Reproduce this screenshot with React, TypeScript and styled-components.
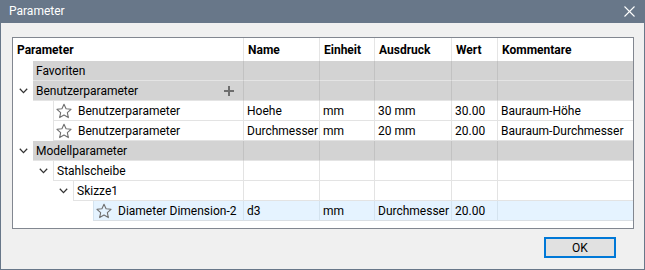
import React from 'react';
import styled, { createGlobalStyle } from 'styled-components';

const GlobalStyle = createGlobalStyle`
  html, body {
    margin: 0;
    padding: 0;
    background: #f0f0f0;
  }
  body {
    font-family: 'Segoe UI', Roboto, 'Noto Sans', sans-serif;
    font-size: 12px;
    color: #000;
  }
`;

const colWidths = [231, 76, 55, 77, 46];
const indentStep = 20;

type Variant = 'group' | 'plain' | 'selected';

const palette = {
  group: { bg: '#d3d3d3', vline: '#c2c2c2', hline: '#e4e4e4' },
  plain: { bg: '#ffffff', vline: '#e3e3e3', hline: '#e3e3e3' },
  selected: { bg: '#e5f3ff', vline: '#d4e3ef', hline: '#dadfe4' }
};

const Window = styled.div`
  width: 645px;
  height: 270px;
  box-sizing: border-box;
  display: flex;
  flex-direction: column;
  background: #f0f0f0;
  border: 1px solid #687789;
  border-top: none;
`;

const TitleBar = styled.div`
  height: 23px;
  flex: 0 0 auto;
  display: flex;
  align-items: center;
  justify-content: space-between;
  padding: 0 9px 0 8px;
  background: #687789;
  color: #ffffff;
`;

const Title = styled.span`
  font-size: 12px;
  line-height: 23px;
`;

const Body = styled.div`
  flex: 1;
  display: flex;
  flex-direction: column;
  padding: 14px 10px 11px 11px;
`;

const TableBox = styled.div`
  height: 192px;
  box-sizing: border-box;
  border: 1px solid #828790;
  background: #ffffff;
  overflow: hidden;
`;

const HeaderRow = styled.div`
  display: grid;
  grid-template-columns: ${colWidths.map(w => `${w}px`).join(' ')} 1fr;
  height: 23px;
`;

const HeaderCell = styled.div<{ $last?: boolean }>`
  box-sizing: border-box;
  padding: 1px 4px 0;
  font-weight: bold;
  line-height: 22px;
  white-space: nowrap;
  border-right: ${p => (p.$last ? 'none' : '1px solid #e5e5e5')};
`;

const Row = styled.div`
  display: flex;
  height: 20px;
`;

const Indent = styled.div<{ $width: number }>`
  flex: 0 0 ${p => p.$width}px;
  display: flex;
  justify-content: flex-end;
  align-items: center;
`;

const ToggleSlot = styled.div`
  width: 20px;
  display: flex;
  justify-content: center;
  align-items: center;
`;

const RowBody = styled.div<{ $first: number; $variant: Variant }>`
  flex: 1;
  display: grid;
  grid-template-columns: ${p => p.$first}px ${colWidths.slice(1).map(w => `${w}px`).join(' ')} 1fr;
  background: ${p => palette[p.$variant].bg};
`;

const Cell = styled.div<{ $variant: Variant; $edge?: boolean; $last?: boolean }>`
  box-sizing: border-box;
  display: flex;
  align-items: center;
  padding: 1px 3px 0;
  white-space: nowrap;
  overflow: hidden;
  line-height: 18px;
  border-bottom: 1px solid ${p => palette[p.$variant].hline};
  border-right: ${p => (p.$last ? 'none' : `1px solid ${palette[p.$variant].vline}`)};
  border-left: ${p => (p.$edge ? `1px solid ${palette[p.$variant].vline}` : 'none')};
`;

const NameCell = styled(Cell)`
  justify-content: space-between;
`;

const Label = styled.span<{ $star?: boolean }>`
  display: flex;
  align-items: center;
  gap: 6px;
  margin-left: ${p => (p.$star ? '-1px' : '0')};
`;

const PlusSlot = styled.span`
  display: flex;
  margin-right: 6px;
`;

const Footer = styled.div`
  display: flex;
  justify-content: flex-end;
  margin-top: 8px;
  padding-right: 18px;
`;

const OkButton = styled.button`
  width: 72px;
  height: 21px;
  box-sizing: border-box;
  border: 2px solid #0078d7;
  background: #e1e1e1;
  font-family: inherit;
  font-size: 12px;
  color: #000;
  padding: 0;
`;

const Chevron = () => (
  <svg width="9" height="6" viewBox="0 0 9 6">
    <polyline points="0.8,0.8 4.5,4.6 8.2,0.8" fill="none" stroke="#333333" strokeWidth="1.3" />
  </svg>
);

const Star = () => (
  <svg width="16" height="16" viewBox="0 0 16 16">
    <polygon
      points="8,1.2 10.06,5.77 15.04,6.31 11.33,9.68 12.35,14.59 8,12.1 3.65,14.59 4.67,9.68 0.96,6.31 5.94,5.77"
      fill="none"
      stroke="#6f6f6f"
      strokeWidth="1.1"
      strokeLinejoin="round"
    />
  </svg>
);

const Plus = () => (
  <svg width="10" height="10" viewBox="0 0 10 10">
    <rect x="4" y="0" width="2" height="10" fill="#6e6e6e" />
    <rect x="0" y="4" width="10" height="2" fill="#6e6e6e" />
  </svg>
);

const CloseIcon = () => (
  <svg width="11" height="11" viewBox="0 0 11 11">
    <line x1="0.5" y1="0.5" x2="10.5" y2="10.5" stroke="#ffffff" strokeWidth="1.1" />
    <line x1="10.5" y1="0.5" x2="0.5" y2="10.5" stroke="#ffffff" strokeWidth="1.1" />
  </svg>
);

type RowData = {
  level: number;
  label: string;
  variant: Variant;
  toggle?: boolean;
  star?: boolean;
  plus?: boolean;
  cols?: string[];
};

const rows: RowData[] = [
  { level: 1, label: 'Favoriten', variant: 'group' },
  { level: 1, label: 'Benutzerparameter', variant: 'group', toggle: true, plus: true },
  { level: 2, label: 'Benutzerparameter', variant: 'plain', star: true, cols: ['Hoehe', 'mm', '30 mm', '30.00', 'Bauraum-Höhe'] },
  { level: 2, label: 'Benutzerparameter', variant: 'plain', star: true, cols: ['Durchmesser', 'mm', '20 mm', '20.00', 'Bauraum-Durchmesser'] },
  { level: 1, label: 'Modellparameter', variant: 'group', toggle: true },
  { level: 2, label: 'Stahlscheibe', variant: 'plain', toggle: true },
  { level: 3, label: 'Skizze1', variant: 'plain', toggle: true },
  { level: 4, label: 'Diameter Dimension-2', variant: 'selected', star: true, cols: ['d3', 'mm', 'Durchmesser', '20.00', ''] }
];

const headers = ['Parameter', 'Name', 'Einheit', 'Ausdruck', 'Wert', 'Kommentare'];

const ParamRow = ({ row }: { row: RowData }) => {
  const indent = row.level * indentStep;
  const cols = row.cols || ['', '', '', '', ''];
  const edge = row.variant !== 'group';
  return (
    <Row>
      <Indent $width={indent}>
        <ToggleSlot>{row.toggle && <Chevron />}</ToggleSlot>
      </Indent>
      <RowBody $first={colWidths[0] - indent} $variant={row.variant}>
        <NameCell $variant={row.variant} $edge={edge}>
          <Label $star={row.star}>
            {row.star && <Star />}
            {row.label}
          </Label>
          {row.plus && (
            <PlusSlot>
              <Plus />
            </PlusSlot>
          )}
        </NameCell>
        {cols.map((c, i) => (
          <Cell key={i} $variant={row.variant} $last={i === cols.length - 1}>
            {c}
          </Cell>
        ))}
      </RowBody>
    </Row>
  );
};

export default function App() {
  return (
    <>
      <GlobalStyle />
      <Window>
        <TitleBar>
          <Title>Parameter</Title>
          <CloseIcon />
        </TitleBar>
        <Body>
          <TableBox>
            <HeaderRow>
              {headers.map((h, i) => (
                <HeaderCell key={h} $last={i === headers.length - 1}>
                  {h}
                </HeaderCell>
              ))}
            </HeaderRow>
            {rows.map((r, i) => (
              <ParamRow key={i} row={r} />
            ))}
          </TableBox>
          <Footer>
            <OkButton>OK</OkButton>
          </Footer>
        </Body>
      </Window>
    </>
  );
}
